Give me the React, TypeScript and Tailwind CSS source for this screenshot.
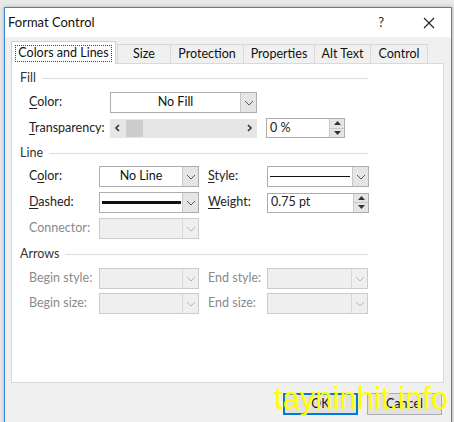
import React from "react";

const Chevron = ({ light }: { light?: boolean }) => (
  <svg width="10" height="6" viewBox="0 0 10 6">
    <path d="M1 1 L5 5 L9 1" fill="none" stroke={light ? "#b5b5b5" : "#5a5a5a"} strokeWidth="1" />
  </svg>
);

function Dropdown({ w, disabled, children }: { w: string; disabled?: boolean; children?: React.ReactNode }) {
  return (
    <div
      className={`flex h-[21px] border ${w} ${disabled ? "border-[#cccccc] bg-[#efefef]" : "border-[#adadad] bg-white"}`}
    >
      <div className="flex-1 flex items-center justify-center overflow-hidden">{children}</div>
      <div
        className={`w-[16px] flex items-center justify-center border-l ${disabled ? "border-[#d8d8d8] bg-[#efefef]" : "border-[#c8c8c8] bg-[#e5e5e5]"}`}
      >
        <Chevron light={disabled} />
      </div>
    </div>
  );
}

function Spinner({ w, value }: { w: string; value: string }) {
  return (
    <div className={`flex h-[20px] border border-[#adadad] bg-white ${w}`}>
      <div className="flex-1 flex items-center pl-[3px] text-[12.5px] text-[#222]">{value}</div>
      <div className="w-[15px] flex flex-col border-l border-[#c8c8c8] bg-[#e5e5e5]">
        <div className="flex-1 flex items-center justify-center border-b border-[#c8c8c8]">
          <svg width="7" height="4" viewBox="0 0 7 4">
            <path d="M0 4 L3.5 0 L7 4 Z" fill="#333" />
          </svg>
        </div>
        <div className="flex-1 flex items-center justify-center">
          <svg width="7" height="4" viewBox="0 0 7 4">
            <path d="M0 0 L3.5 4 L7 0 Z" fill="#333" />
          </svg>
        </div>
      </div>
    </div>
  );
}

function Header({ text, mt }: { text: string; mt: string }) {
  return (
    <div className={`flex items-center h-[14px] w-[348px] ${mt}`}>
      <span className="text-[12.5px] text-[#333] leading-none">{text}</span>
      <div className="flex-1 h-px bg-[#dcdcdc] ml-[6px]" />
    </div>
  );
}

function Label({ w, children, disabled }: { w: string; children: React.ReactNode; disabled?: boolean }) {
  return (
    <div className={`${w} shrink-0 text-[12.5px] leading-none ${disabled ? "text-[#8a8a8a]" : "text-[#222]"}`}>
      {children}
    </div>
  );
}

const U = ({ c }: { c: string }) => <span className="underline underline-offset-2">{c}</span>;

const tab =
  "-ml-px h-[19px] border border-b-0 border-[#d9d9d9] bg-[#f0f0f0] flex items-center justify-center text-[12.5px] text-[#111]";

export default function App() {
  return (
    <div className="w-[454px] h-[422px] overflow-hidden relative bg-[#e9e9e9] font-['Lato',sans-serif]">
      <div className="pt-[7px] pl-[4px]">
        <div className="w-[448px] h-[430px] border border-[#3c84d4] bg-[#f0f0f0] shadow-[0_0_4px_rgba(0,0,0,0.25)]">
          {/* title bar */}
          <div className="h-[29px] bg-white flex items-center pl-[3px]">
            <span className="text-[13px] text-[#111]">Format Control</span>
            <div className="flex-1" />
            <span className="text-[13px] text-[#222] mr-[39px]">?</span>
            <svg width="12" height="12" viewBox="0 0 12 12" className="mr-[16px]">
              <path d="M1 1 L11 11 M11 1 L1 11" stroke="#222" strokeWidth="1.1" />
            </svg>
          </div>
          {/* tabs */}
          <div className="pl-[6px] pt-[4px] flex items-end relative z-10">
            <div className="w-[105px] h-[23px] -mb-px bg-white border border-b-0 border-[#d0d0d0] flex items-center justify-center">
              <div className="w-[97px] h-[17px] border border-dotted border-[#444] flex items-center justify-center text-[12.5px] text-[#111]">
                Colors and Lines
              </div>
            </div>
            <div className={`ml-[1px] w-[54px] ${tab}`}>Size</div>
            <div className={`w-[74px] ${tab}`}>Protection</div>
            <div className={`w-[72px] ${tab}`}>Properties</div>
            <div className={`w-[57px] ${tab}`}>Alt Text</div>
            <div className={`w-[58px] ${tab}`}>Control</div>
          </div>
          {/* panel */}
          <div className="ml-[6px] w-[433px] h-[320px] bg-white border border-[#d9d9d9] pl-[8px] pt-[7px]">
            <Header text="Fill" mt="mt-0" />
            <div className="pl-[9px]">
              <div className="flex items-center mt-[7px]">
                <Label w="w-[81px]">
                  <U c="C" />olor:
                </Label>
                <Dropdown w="w-[147px]">
                  <span className="text-[12.5px] text-[#111]">No Fill</span>
                </Dropdown>
              </div>
              <div className="flex items-center mt-[5px]">
                <Label w="w-[81px]">
                  <U c="T" />ransparency:
                </Label>
                <div className="w-[147px] h-[19px] bg-[#e6e6e6] flex items-center">
                  <svg width="16" height="8" viewBox="0 0 16 8">
                    <path d="M9 1 L6 4 L9 7" fill="none" stroke="#333" strokeWidth="1.6" />
                  </svg>
                  <div className="w-[17px] h-[17px] bg-[#cdcdcd]" />
                  <div className="flex-1" />
                  <svg width="16" height="8" viewBox="0 0 16 8">
                    <path d="M7 1 L10 4 L7 7" fill="none" stroke="#333" strokeWidth="1.6" />
                  </svg>
                </div>
                <div className="ml-[9px]">
                  <Spinner w="w-[79px]" value="0 %" />
                </div>
              </div>
            </div>
            <Header text="Line" mt="mt-[8px]" />
            <div className="pl-[9px]">
              <div className="flex items-center mt-[6px]">
                <Label w="w-[70px]">
                  C<U c="o" />lor:
                </Label>
                <Dropdown w="w-[100px]">
                  <span className="text-[12.5px] text-[#111]">No Line</span>
                </Dropdown>
                <div className="ml-[9px]" />
                <Label w="w-[59px]">
                  <U c="S" />tyle:
                </Label>
                <Dropdown w="w-[102px]">
                  <div className="w-[80px] h-px bg-[#111]" />
                </Dropdown>
              </div>
              <div className="flex items-center mt-[5px]">
                <Label w="w-[70px]">
                  <U c="D" />ashed:
                </Label>
                <Dropdown w="w-[100px]">
                  <div className="w-[79px] h-[3px] bg-[#111]" />
                </Dropdown>
                <div className="ml-[9px]" />
                <Label w="w-[59px]">
                  <U c="W" />eight:
                </Label>
                <Spinner w="w-[102px]" value="0.75 pt" />
              </div>
              <div className="flex items-center mt-[5px]">
                <Label w="w-[70px]" disabled>
                  Connector:
                </Label>
                <Dropdown w="w-[100px]" disabled />
              </div>
            </div>
            <Header text="Arrows" mt="mt-[8px]" />
            <div className="pl-[9px]">
              <div className="flex items-center mt-[7px]">
                <Label w="w-[70px]" disabled>
                  Begin style:
                </Label>
                <Dropdown w="w-[100px]" disabled />
                <div className="ml-[9px]" />
                <Label w="w-[59px]" disabled>
                  End style:
                </Label>
                <Dropdown w="w-[101px]" disabled />
              </div>
              <div className="flex items-center mt-[4px]">
                <Label w="w-[70px]" disabled>
                  Begin size:
                </Label>
                <Dropdown w="w-[100px]" disabled />
                <div className="ml-[9px]" />
                <Label w="w-[59px]" disabled>
                  End size:
                </Label>
                <Dropdown w="w-[101px]" disabled />
              </div>
            </div>
          </div>
          {/* buttons */}
          <div className="flex mt-[10px] pl-[278px]">
            <div className="w-[75px] h-[22px] border-2 border-[#0078d7] bg-[#e1e1e1] flex items-center justify-center text-[12.5px] text-[#111]">
              OK
            </div>
            <div className="ml-[9px] w-[75px] h-[22px] border border-[#adadad] bg-[#e1e1e1] flex items-center justify-center text-[12.5px] text-[#111]">
              Cancel
            </div>
          </div>
        </div>
      </div>
      <div className="absolute left-[274px] top-[383px] text-[31px] leading-none text-[#ffff00] font-['Liberation_Sans',sans-serif] whitespace-nowrap">
        tayninhit.info
      </div>
    </div>
  );
}
